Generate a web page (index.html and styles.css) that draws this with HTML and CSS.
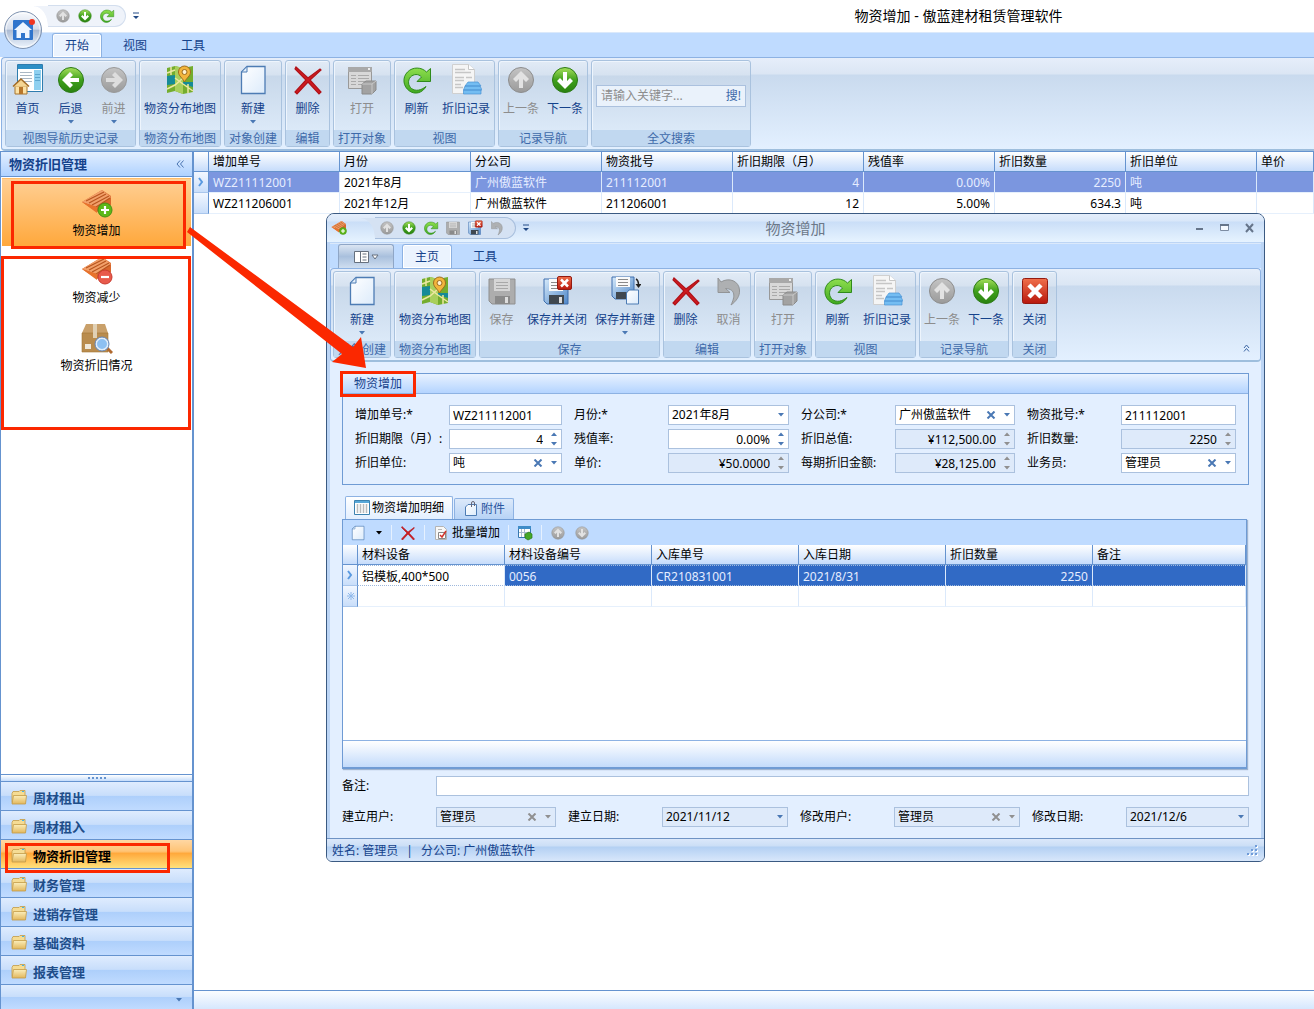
FILE: index.html
```html
<!DOCTYPE html>
<html lang="zh-CN">
<head>
<meta charset="utf-8">
<title>物资增加 - 傲蓝建材租赁管理软件</title>
<link rel="stylesheet" href="styles.css">
</head>
<body>
<svg class="sprite" width="0" height="0" aria-hidden="true">
  <defs>
    <linearGradient id="gGreen" x1="0" y1="0" x2="0" y2="1"><stop offset="0" stop-color="#a6e05c"/><stop offset=".5" stop-color="#3fa01c"/><stop offset="1" stop-color="#2a8210"/></linearGradient>
    <linearGradient id="gFresh" x1="0" y1="0" x2="0" y2="1"><stop offset="0" stop-color="#8ede4e"/><stop offset="1" stop-color="#3fa91f"/></linearGradient>
    <linearGradient id="gGray" x1="0" y1="0" x2="0" y2="1"><stop offset="0" stop-color="#c4c4c4"/><stop offset="1" stop-color="#9a9a9a"/></linearGradient>
    <linearGradient id="gPage" x1="0" y1="0" x2="1" y2="1"><stop offset="0" stop-color="#fff"/><stop offset="1" stop-color="#dcebfb"/></linearGradient>
    <linearGradient id="gRed" x1="0" y1="0" x2="0" y2="1"><stop offset="0" stop-color="#f0704c"/><stop offset="1" stop-color="#b8170c"/></linearGradient>
    <linearGradient id="gFolder" x1="0" y1="0" x2="0" y2="1"><stop offset="0" stop-color="#fbeebb"/><stop offset="1" stop-color="#e2b75c"/></linearGradient>
    <linearGradient id="gDisk" x1="0" y1="0" x2="1" y2="1"><stop offset="0" stop-color="#d8ebfb"/><stop offset="1" stop-color="#4d86c8"/></linearGradient>
    <linearGradient id="gOrb" x1="0" y1="0" x2="0" y2="1"><stop offset="0" stop-color="#f8fafd"/><stop offset=".48" stop-color="#d3dceb"/><stop offset=".5" stop-color="#a9b9d2"/><stop offset="1" stop-color="#f0f7ff"/></linearGradient>
  </defs>
  <symbol id="arrow-left" viewBox="0 0 32 32"><circle cx="16" cy="16" r="12.500" fill="url(#gGreen)" stroke="#2b7a15"/><path d="M7 16l8-8 3 3-3 3h9v4h-9l3 3-3 3z" fill="#fff"/></symbol>
  <symbol id="arrow-right-off" viewBox="0 0 32 32"><circle cx="16" cy="16" r="12.500" fill="url(#gGray)" stroke="#999"/><path d="M25 16l-8-8-3 3 3 3H8v4h9l-3 3 3 3z" fill="#ddd"/></symbol>
  <symbol id="arrow-up-off" viewBox="0 0 32 32"><circle cx="16" cy="16" r="12.500" fill="url(#gGray)" stroke="#8d8d8d"/><path d="M16 7l-8 8 3 3 3-3v9h4v-9l3 3 3-3z" fill="#e2e2e2"/></symbol>
  <symbol id="arrow-down-off" viewBox="0 0 32 32"><circle cx="16" cy="16" r="12.500" fill="url(#gGray)" stroke="#8d8d8d"/><path d="M16 25l-8-8 3-3 3 3V8h4v9l3-3 3 3z" fill="#e2e2e2"/></symbol>
  <symbol id="arrow-down" viewBox="0 0 32 32"><circle cx="16" cy="16" r="12.500" fill="url(#gGreen)" stroke="#2b7a15"/><path d="M16 25l-8-8 3-3 3 3V8h4v9l3-3 3 3z" fill="#fff"/></symbol>
  <symbol id="homepage" viewBox="0 0 32 32"><path d="M5.500.5h25v27h-25z" fill="#fff" stroke="#2e7cae"/><path d="M6 1h24v4H6z" fill="#2c8fc6"/><path d="M22 6h7v20h-7z" fill="#8fd0f0"/><path d="M8 8.500h12M8 11.500h12M8 14.500h12M8 17.500h12" stroke="#a9b7c4"/><path d="M23 10.500h5M23 13.500h5M23 16.500h5" stroke="#5ea7cf"/><path d="M3 22h12v8H3z" fill="#fbe2a6" stroke="#a8742c"/><path d="M1 22.500L9 15l8 7.500" fill="#f5d694" stroke="#a26a24" stroke-width="1.500"/><path d="M7 23h4v7H7z" fill="#b8762a"/></symbol>
  <symbol id="map" viewBox="0 0 32 32"><path d="M3 4l8-2 8 2 10-2v26l-10 2-8-3-8 2z" fill="#74ad2e"/><path d="M11 2l8 2v26l-8-3z" fill="#a9cf5c"/><path d="M3 12l8-1v9l-8 1zM19 18l10 0v5l-10-3z" fill="#168a98"/><path d="M3 9l8-3M11 14l8 6 10 7M3 25l8-4 8-7M24 20v9M7 3v8" stroke="#ece7a0" fill="none" stroke-width="1.500"/><path d="M20.500 18c-2-4-6-6-6-10a6 6 0 0112 0c0 4-4 6-6 10z" fill="#f2b53c" stroke="#9d6a1c"/><circle cx="20.500" cy="8" r="2.500" fill="#fff3d0" stroke="#9d6a1c"/></symbol>
  <symbol id="newdoc" viewBox="0 0 32 32"><path d="M10 2.500h18v27H4.500V8z" fill="url(#gPage)" stroke="#4d7cb4" stroke-width="1.300"/><path d="M4.500 8H10V2.500z" fill="#e4f0fc" stroke="#4d7cb4"/></symbol>
  <symbol id="redx" viewBox="0 0 32 32"><path d="M4 3l12 11L28 5l1 1-11 10 11 12-2 2-11-12L5 30l-2-2 11-12L3 5z" fill="#cf1a20" stroke="#b01218" stroke-width="1.200"/></symbol>
  <symbol id="open-off" viewBox="0 0 32 32"><path d="M2.500 3.500h23v21h-23z" fill="#d8d8d8" stroke="#999"/><path d="M2 3h24v5H2z" fill="#a9a9a9"/><path d="M22 5h2" stroke="#eee" stroke-width="2"/><path d="M5 11.500h5M12 11.500h11M5 14.500h5M12 14.500h11M5 17.500h5M12 17.500h11M5 20.500h5M12 20.500h6" stroke="#aaa"/><path d="M16 20l4-3h10v9l-4 4H16z" fill="#a2a2a2" stroke="#8a8a8a"/><path d="M16 20h10v10M26 20l4-3" fill="none" stroke="#c8c8c8"/></symbol>
  <symbol id="refresh" viewBox="0 0 32 32"><path d="M29.500 4.500v13H16l4.500-4.500C17.500 9.500 12.500 10 9.500 13c-3 3.500-2.500 8.500 1 11.500 4 3 9.500 2 14.500-2C21.500 29 14 31 8.500 27 2 22.500 1 13.500 6.500 8 12 2.500 20.500 3 25.500 8z" fill="url(#gFresh)" stroke="#2f8a1b"/></symbol>
  <symbol id="record" viewBox="0 0 32 32"><path d="M2.500.5h16l6 5v24h-22z" fill="#f5f5f5" stroke="#d0d0d0"/><path d="M18.500.5v5h6" fill="#fff" stroke="#c6c6c6"/><path d="M5 5.500h10M5 8.500h16M5 13.500h9M16 13.500h6M5 16.500h9M5 20.500h6M5 23.500h8" stroke="#c6c6c6" stroke-width="1.500"/><path d="M18 18h10l3 4H15zM15 22h15l2 4H13.500zM13.500 26H31v4H13.500z" fill="#74bdf2" stroke="#4a94d4" stroke-width=".7"/></symbol>
  <symbol id="save-off" viewBox="0 0 32 32"><path d="M3 4h26v25H6l-3-3z" fill="#adadad" stroke="#8f8f8f"/><path d="M8 4h16v12H8z" fill="#d6d6d6"/><path d="M10 7.500h12M10 10.500h12M10 13.500h12" stroke="#a8a8a8"/><path d="M9 21h15v8H9z" fill="#8a8a8a"/><path d="M19 22h3v6h-3z" fill="#ddd"/></symbol>
  <symbol id="save-close" viewBox="0 0 32 32"><path d="M3 4h24v25H6l-3-3z" fill="url(#gDisk)" stroke="#3f6fae"/><path d="M8 4h14v12H8z" fill="#fafafa"/><path d="M10 7.500h9M10 10.500h9M10 13.500h9" stroke="#8a8a8a"/><path d="M8 20h15v9H8z" fill="#404850"/><path d="M18 22h3v6h-3z" fill="#ddd"/><rect x="16.500" y="1.500" width="14" height="13" rx="1.500" fill="url(#gRed)" stroke="#941a10"/><path d="M20 4.500l7 7m0-7l-7 7" stroke="#fff" stroke-width="2.500"/></symbol>
  <symbol id="save-new" viewBox="0 0 32 32"><path d="M3 2h22v22H6l-3-3z" fill="url(#gDisk)" stroke="#3f6fae"/><path d="M7 2h14v10H7z" fill="#fafafa"/><path d="M9 4.500h10M9 7.500h10M9 10.500h10" stroke="#8a8a8a"/><path d="M7 17h12v7H7z" fill="#404850"/><path d="M27 4c2 1 2.500 3 2.500 6" stroke="#222" fill="none" stroke-width="1.500"/><path d="M26.500 9h6l-3 4z" fill="#222"/><path d="M20 15h9.500v14h-12V18z" fill="url(#gPage)" stroke="#4d7cb4"/></symbol>
  <symbol id="undo-off" viewBox="0 0 32 32"><path d="M5 3l3 4c8-5 18-1 18.500 8 .5 6-3 11-8.500 15 4-8 5-16-5.500-16.500l4.500 4L5 17.500z" fill="#aeb0b2" stroke="#929496"/></symbol>
  <symbol id="close-red" viewBox="0 0 32 32"><rect x="3.500" y="3.500" width="25" height="25" rx="2" fill="url(#gRed)" stroke="#941a10"/><path d="M10 10l12 12m0-12L10 22" stroke="#fff" stroke-width="4.500"/></symbol>
  <symbol id="boards" viewBox="0 0 32 32"><path d="M1 14L21 2l9 6v9L16 24z" fill="#d9672c"/><path d="M1 14L21 2l9 7-14 10z" fill="#f2a06a"/><path d="M5 13L23 4M8 15L25 6M11 17L28 8M15 19l14-9" stroke="#b8561f" stroke-width="1.200"/><path d="M1 14l15 5v6z" fill="#e8732c"/></symbol>
  <symbol id="boards-add" viewBox="0 0 32 32"><use href="#boards"/><circle cx="24" cy="22" r="7" fill="#5cb818" stroke="#478f14"/><path d="M24 18v8M20 22h8" stroke="#fff" stroke-width="2.200"/></symbol>
  <symbol id="boards-sub" viewBox="0 0 32 32"><use href="#boards"/><circle cx="24" cy="22" r="7" fill="#e85a4c" stroke="#c93a2e"/><path d="M20 22h8" stroke="#fff" stroke-width="2.200"/></symbol>
  <symbol id="box-find" viewBox="0 0 32 32"><path d="M5 1h19l3 9H1z" fill="#c9a06a"/><path d="M1 10h26v19H1z" fill="#b98c4e" stroke="#a27638" stroke-width=".6"/><path d="M12 1h4v14h-4z" fill="#e0d0b4"/><path d="M4 21h6v5H4z" fill="#efe8da"/><path d="M26 25l5 5" stroke="#b06a30" stroke-width="3"/><circle cx="21" cy="21" r="6" fill="#8dc0f2" stroke="#e2edf8" stroke-width="2"/><circle cx="21" cy="21" r="7" fill="none" stroke="#5f84b8"/></symbol>
  <symbol id="folder" viewBox="0 0 16 16"><path d="M1 3.500L2 1.500h6L9 .5h5v12H1z" fill="#f5dc94" stroke="#c39a46" stroke-width=".8"/><path d="M2.500 5.500h13l-1 8.500H1z" fill="url(#gFolder)" stroke="#c39a46" stroke-width=".8"/><path d="M11 1.500h2" stroke="#3db4ec"/></symbol>
  <symbol id="table" viewBox="0 0 16 16"><path d="M.5.500h15v14H.5z" fill="#fff" stroke="#3c82b0"/><path d="M1 1h14v2H1z" fill="#59a8d8"/><path d="M3.500 4v9M6.500 4v9M9.500 4v9M12.500 4v9" stroke="#bbb" stroke-width="1.500"/></symbol>
  <symbol id="attach" viewBox="0 0 16 16"><path d="M5 3.500h8.500v11h-11V6z" fill="url(#gPage)" stroke="#4d7cb4"/><path d="M8.500 6V2a1.500 1.500 0 013 0v3" fill="none" stroke="#667"/></symbol>
  <symbol id="batch" viewBox="0 0 16 16"><path d="M2.500 1.500h8l3 3v10h-11z" fill="#f8f8f8" stroke="#b4b4b4"/><path d="M5 4.500h4" stroke="#b8b8b8"/><path d="M5.500 7.500h7v6h-7z" fill="#fff" stroke="#888"/><path d="M7 10l2 2 4-6" fill="none" stroke="#d2342a" stroke-width="1.500"/></symbol>
  <symbol id="table-ok" viewBox="0 0 16 16"><path d="M1.500 1.500h12v11h-12z" fill="#fff" stroke="#3778b0"/><path d="M1 1h13v3H1z" fill="#3f8cc8"/><path d="M4.500 4v8M7.500 4v8M2 7.500h11" stroke="#a8bcd0"/><path d="M8 9l4-2 3 2v4l-4 2-3-2z" fill="#46a828" stroke="#287a14" stroke-width=".7"/></symbol>
  <symbol id="down" viewBox="0 0 6 4"><path d="M0 0h6L3 3.500z" fill="currentColor"/></symbol>
  <symbol id="overflow" viewBox="0 0 8 8"><path d="M1 1h6" stroke="#234a86"/><path d="M1 4h6L4 7z" fill="#234a86"/></symbol>
  <symbol id="spin" viewBox="0 0 6 14"><path d="M0 4h6L3 .5zM0 10h6l-3 3.500z" fill="currentColor"/></symbol>
  <symbol id="clear" viewBox="0 0 10 8"><path d="M1.500.5l7 7m0-7l-7 7" stroke="currentColor" stroke-width="2"/></symbol>
</svg>

<header class="app-head">
  <div class="app-title">
    <div class="quick">
      <button aria-label="上一条"><svg class="i16"><use href="#arrow-up-off"/></svg></button>
      <button aria-label="下一条"><svg class="i16"><use href="#arrow-down"/></svg></button>
      <button aria-label="刷新"><svg class="i16"><use href="#refresh"/></svg></button>
    </div>
    <button class="more" aria-label="自定义"><svg width="8" height="8"><use href="#overflow"/></svg></button>
    <h1>物资增加 - 傲蓝建材租赁管理软件</h1>
  </div>
  <button class="orb" aria-label="应用程序">
    <svg width="40" height="40" viewBox="0 0 40 40"><circle cx="20" cy="20" r="18.500" fill="url(#gOrb)" stroke="#7f93b0"/><circle cx="20" cy="20" r="17" fill="none" stroke="#fff" opacity=".7"/><rect x="10" y="10" width="20" height="20" rx="1" fill="#2f74cc"/><path d="M20 12l9 8h-2.500v8H22v-5h-4v5h-4.500v-8H11z" fill="#eef5ff"/><circle cx="29" cy="12" r="3" fill="#f03420"/></svg>
  </button>
  <nav class="tabs app-tabs">
    <button class="tab on">开始</button><button class="tab">视图</button><button class="tab">工具</button>
  </nav>
  <div class="ribbon app-ribbon">
    <section class="grp"><div class="cmds">
      <button class="cmd"><svg class="i32"><use href="#homepage"/></svg><span>首页</span></button>
      <button class="cmd"><svg class="i32"><use href="#arrow-left"/></svg><span>后退</span><svg class="caret"><use href="#down"/></svg></button>
      <button class="cmd off"><svg class="i32"><use href="#arrow-right-off"/></svg><span>前进</span><svg class="caret"><use href="#down"/></svg></button>
    </div><h2>视图导航历史记录</h2></section>
    <section class="grp"><div class="cmds"><button class="cmd"><svg class="i32"><use href="#map"/></svg><span>物资分布地图</span></button></div><h2>物资分布地图</h2></section>
    <section class="grp"><div class="cmds"><button class="cmd"><svg class="i32"><use href="#newdoc"/></svg><span>新建</span><svg class="caret"><use href="#down"/></svg></button></div><h2>对象创建</h2></section>
    <section class="grp"><div class="cmds"><button class="cmd"><svg class="i32"><use href="#redx"/></svg><span>删除</span></button></div><h2>编辑</h2></section>
    <section class="grp"><div class="cmds"><button class="cmd off"><svg class="i32"><use href="#open-off"/></svg><span>打开</span></button></div><h2>打开对象</h2></section>
    <section class="grp"><div class="cmds">
      <button class="cmd"><svg class="i32"><use href="#refresh"/></svg><span>刷新</span></button>
      <button class="cmd"><svg class="i32"><use href="#record"/></svg><span>折旧记录</span></button>
    </div><h2>视图</h2></section>
    <section class="grp"><div class="cmds">
      <button class="cmd off"><svg class="i32"><use href="#arrow-up-off"/></svg><span>上一条</span></button>
      <button class="cmd"><svg class="i32"><use href="#arrow-down"/></svg><span>下一条</span></button>
    </div><h2>记录导航</h2></section>
    <section class="grp search-grp"><div class="cmds"><div class="search"><input type="text" aria-label="全文搜索" placeholder="请输入关键字..."><button>搜!</button></div></div><h2>全文搜索</h2></section>
  </div>
</header>

<div class="work">
  <aside class="side">
    <div class="side-head"><h2>物资折旧管理</h2><button aria-label="折叠"><svg width="8" height="8" viewBox="0 0 8 8"><path d="M4 .5L1 4l3 3.500M7.500.5l-3 3.500 3 3.500" fill="none" stroke="#4a74b0"/></svg></button></div>
    <ul class="side-items">
      <li><a href="#" class="on"><svg class="i32"><use href="#boards-add"/></svg>物资增加</a></li>
      <li><a href="#"><svg class="i32"><use href="#boards-sub"/></svg>物资减少</a></li>
      <li><a href="#"><svg class="i32"><use href="#box-find"/></svg>物资折旧情况</a></li>
    </ul>
    <div class="splitter"><i></i></div>
    <nav class="side-nav">
      <a href="#"><svg class="i16"><use href="#folder"/></svg>周材租出</a>
      <a href="#"><svg class="i16"><use href="#folder"/></svg>周材租入</a>
      <a href="#" class="on"><svg class="i16"><use href="#folder"/></svg>物资折旧管理</a>
      <a href="#"><svg class="i16"><use href="#folder"/></svg>财务管理</a>
      <a href="#"><svg class="i16"><use href="#folder"/></svg>进销存管理</a>
      <a href="#"><svg class="i16"><use href="#folder"/></svg>基础资料</a>
      <a href="#"><svg class="i16"><use href="#folder"/></svg>报表管理</a>
      <div class="side-more"><button aria-label="更多"><svg class="caret"><use href="#down"/></svg></button></div>
    </nav>
  </aside>
  <main class="list">
    <table class="grid main-grid">
      <colgroup><col class="c-mark"><col><col><col><col><col><col><col><col><col class="c-rest"></colgroup>
      <thead><tr><th></th><th>增加单号</th><th>月份</th><th>分公司</th><th>物资批号</th><th>折旧期限（月）</th><th>残值率</th><th>折旧数量</th><th>折旧单位</th><th>单价</th></tr></thead>
      <tbody>
        <tr class="sel"><th class="mark"><svg width="6" height="10" viewBox="0 0 6 10"><path d="M1 1l3 4-3 4" fill="none" stroke="#5a9ae0" stroke-width="2"/></svg></th><td>WZ211112001</td><td class="focus">2021年8月</td><td>广州傲蓝软件</td><td>211112001</td><td class="r">4</td><td class="r">0.00%</td><td class="r">2250</td><td>吨</td><td></td></tr>
        <tr><th class="mark"></th><td>WZ211206001</td><td>2021年12月</td><td>广州傲蓝软件</td><td>211206001</td><td class="r">12</td><td class="r">5.00%</td><td class="r">634.3</td><td>吨</td><td></td></tr>
      </tbody>
    </table>
    <div class="list-foot"></div>
  </main>
</div>

<div class="win" role="dialog" aria-label="物资增加">
  <div class="win-title">
    <div class="win-left">
      <svg class="i16"><use href="#boards-add"/></svg>
      <div class="quick">
        <button aria-label="上一条"><svg class="i16"><use href="#arrow-up-off"/></svg></button>
        <button aria-label="下一条"><svg class="i16"><use href="#arrow-down"/></svg></button>
        <button aria-label="刷新"><svg class="i16"><use href="#refresh"/></svg></button>
        <button aria-label="保存"><svg class="i16"><use href="#save-off"/></svg></button>
        <button aria-label="保存并关闭"><svg class="i16"><use href="#save-close"/></svg></button>
        <button aria-label="撤销"><svg class="i16"><use href="#undo-off"/></svg></button>
      </div>
      <button class="more" aria-label="自定义"><svg width="8" height="8"><use href="#overflow"/></svg></button>
    </div>
    <h2>物资增加</h2>
    <div class="win-ctl">
      <button aria-label="最小化"><svg width="11" height="10" viewBox="0 0 11 10"><path d="M2 6h7" stroke="#66758a" stroke-width="2"/></svg></button>
      <button aria-label="最大化"><svg width="11" height="10" viewBox="0 0 11 10"><path d="M1.500 1.500h8v6h-8z" fill="#f6faff" stroke="#7d8ca2"/><path d="M1 2h9" stroke="#66758a" stroke-width="2"/></svg></button>
      <button aria-label="关闭"><svg width="11" height="10" viewBox="0 0 11 10"><path d="M2 1l7 8m0-8L2 9" stroke="#66758a" stroke-width="2"/></svg></button>
    </div>
  </div>
  <div class="win-frame">
    <nav class="tabs win-tabs">
      <button class="menu-btn" aria-label="菜单"><svg width="26" height="14" viewBox="0 0 26 14"><path d="M1.500 1.500h14v11h-14zM7.500 1.500v11" fill="#fff" stroke="#66707e"/><path d="M9.500 4h4M9.500 7h4M9.500 10h4" stroke="#66707e"/><path d="M19 5h6l-3 4z" fill="#fff" stroke="#66707e"/></svg></button>
      <button class="tab on">主页</button><button class="tab">工具</button>
    </nav>
    <div class="ribbon win-ribbon">
      <section class="grp"><div class="cmds"><button class="cmd"><svg class="i32"><use href="#newdoc"/></svg><span>新建</span><svg class="caret"><use href="#down"/></svg></button></div><h2>对象创建</h2></section>
      <section class="grp"><div class="cmds"><button class="cmd"><svg class="i32"><use href="#map"/></svg><span>物资分布地图</span></button></div><h2>物资分布地图</h2></section>
      <section class="grp"><div class="cmds">
        <button class="cmd off"><svg class="i32"><use href="#save-off"/></svg><span>保存</span></button>
        <button class="cmd"><svg class="i32"><use href="#save-close"/></svg><span>保存并关闭</span></button>
        <button class="cmd"><svg class="i32"><use href="#save-new"/></svg><span>保存并新建</span><svg class="caret"><use href="#down"/></svg></button>
      </div><h2>保存</h2></section>
      <section class="grp"><div class="cmds">
        <button class="cmd"><svg class="i32"><use href="#redx"/></svg><span>删除</span></button>
        <button class="cmd off"><svg class="i32"><use href="#undo-off"/></svg><span>取消</span></button>
      </div><h2>编辑</h2></section>
      <section class="grp"><div class="cmds"><button class="cmd off"><svg class="i32"><use href="#open-off"/></svg><span>打开</span></button></div><h2>打开对象</h2></section>
      <section class="grp"><div class="cmds">
        <button class="cmd"><svg class="i32"><use href="#refresh"/></svg><span>刷新</span></button>
        <button class="cmd"><svg class="i32"><use href="#record"/></svg><span>折旧记录</span></button>
      </div><h2>视图</h2></section>
      <section class="grp"><div class="cmds">
        <button class="cmd off"><svg class="i32"><use href="#arrow-up-off"/></svg><span>上一条</span></button>
        <button class="cmd"><svg class="i32"><use href="#arrow-down"/></svg><span>下一条</span></button>
      </div><h2>记录导航</h2></section>
      <section class="grp"><div class="cmds"><button class="cmd"><svg class="i32"><use href="#close-red"/></svg><span>关闭</span></button></div><h2>关闭</h2></section>
      <button class="fold" aria-label="折叠功能区"><svg width="7" height="8" viewBox="0 0 7 8"><path d="M1 4l2.500-3L6 4M1 7.500l2.500-3 2.500 3" fill="none" stroke="#3c66a4"/></svg></button>
    </div>
    <form class="win-body">
      <fieldset class="box">
        <legend>物资增加</legend>
        <div class="fields">
          <div class="field"><label for="f1">增加单号:*</label><div class="ed"><input id="f1" value="WZ211112001"></div></div>
          <div class="field"><label for="f2">月份:*</label><div class="ed"><select id="f2"><option>2021年8月</option></select><svg class="caret"><use href="#down"/></svg></div></div>
          <div class="field"><label for="f3">分公司:*</label><div class="ed"><select id="f3"><option>广州傲蓝软件</option></select><button type="button" aria-label="清除"><svg class="clear"><use href="#clear"/></svg></button><svg class="caret"><use href="#down"/></svg></div></div>
          <div class="field"><label for="f4">物资批号:*</label><div class="ed"><input id="f4" value="211112001"></div></div>
          <div class="field"><label for="f5">折旧期限（月）:</label><div class="ed"><input id="f5" class="r" value="4"><svg class="spin"><use href="#spin"/></svg></div></div>
          <div class="field"><label for="f6">残值率:</label><div class="ed"><input id="f6" class="r" value="0.00%"><svg class="spin"><use href="#spin"/></svg></div></div>
          <div class="field"><label for="f7">折旧总值:</label><div class="ed ro"><input id="f7" class="r" value="¥112,500.00" readonly><svg class="spin"><use href="#spin"/></svg></div></div>
          <div class="field"><label for="f8">折旧数量:</label><div class="ed ro"><input id="f8" class="r" value="2250" readonly><svg class="spin"><use href="#spin"/></svg></div></div>
          <div class="field"><label for="f9">折旧单位:</label><div class="ed"><select id="f9"><option>吨</option></select><button type="button" aria-label="清除"><svg class="clear"><use href="#clear"/></svg></button><svg class="caret"><use href="#down"/></svg></div></div>
          <div class="field"><label for="f10">单价:</label><div class="ed ro"><input id="f10" class="r" value="¥50.0000" readonly><svg class="spin"><use href="#spin"/></svg></div></div>
          <div class="field"><label for="f11">每期折旧金额:</label><div class="ed ro"><input id="f11" class="r" value="¥28,125.00" readonly><svg class="spin"><use href="#spin"/></svg></div></div>
          <div class="field"><label for="f12">业务员:</label><div class="ed"><select id="f12"><option>管理员</option></select><button type="button" aria-label="清除"><svg class="clear"><use href="#clear"/></svg></button><svg class="caret"><use href="#down"/></svg></div></div>
        </div>
      </fieldset>
      <div class="dtabs">
        <button type="button" class="on"><svg class="i16"><use href="#table"/></svg>物资增加明细</button>
        <button type="button"><svg class="i16"><use href="#attach"/></svg>附件</button>
      </div>
      <div class="detail">
        <div class="bar">
          <button type="button" class="new" aria-label="新建"><svg class="i16"><use href="#newdoc"/></svg><svg class="caret"><use href="#down"/></svg></button><i></i>
          <button type="button" aria-label="删除"><svg class="i16"><use href="#redx"/></svg></button><i></i>
          <button type="button"><svg class="i16"><use href="#batch"/></svg>批量增加</button><i></i>
          <button type="button" aria-label="导出"><svg class="i16"><use href="#table-ok"/></svg></button><i></i>
          <button type="button" aria-label="上移"><svg class="i16"><use href="#arrow-up-off"/></svg></button>
          <button type="button" aria-label="下移"><svg class="i16"><use href="#arrow-down-off"/></svg></button>
        </div>
        <table class="grid sub-grid">
          <colgroup><col class="c-mark"><col><col><col><col><col><col class="c-rest"></colgroup>
          <thead><tr><th></th><th>材料设备</th><th>材料设备编号</th><th>入库单号</th><th>入库日期</th><th>折旧数量</th><th>备注</th></tr></thead>
          <tbody>
            <tr class="sel"><th class="mark"><svg width="6" height="10" viewBox="0 0 6 10"><path d="M1 1l3 4-3 4" fill="none" stroke="#5a9ae0" stroke-width="2"/></svg></th><td class="focus">铝模板,400*500</td><td>0056</td><td>CR210831001</td><td>2021/8/31</td><td class="r">2250</td><td></td></tr>
            <tr><th class="mark"><svg width="8" height="8" viewBox="0 0 8 8"><path d="M4 0v8M0 4h8M1 1l6 6M7 1L1 7" stroke="#8fb8ea"/></svg></th><td></td><td></td><td></td><td></td><td></td><td></td></tr>
          </tbody>
        </table>
        <div class="detail-foot"></div>
      </div>
      <div class="field memo"><label for="m1">备注:</label><div class="ed"><input id="m1"></div></div>
      <div class="audit">
        <div class="field"><label for="a1">建立用户:</label><div class="ed ro"><select id="a1"><option>管理员</option></select><button type="button" aria-label="清除"><svg class="clear"><use href="#clear"/></svg></button><svg class="caret"><use href="#down"/></svg></div></div>
        <div class="field"><label for="a2">建立日期:</label><div class="ed ro date"><select id="a2"><option>2021/11/12</option></select><svg class="caret"><use href="#down"/></svg></div></div>
        <div class="field"><label for="a3">修改用户:</label><div class="ed ro"><select id="a3"><option>管理员</option></select><button type="button" aria-label="清除"><svg class="clear"><use href="#clear"/></svg></button><svg class="caret"><use href="#down"/></svg></div></div>
        <div class="field"><label for="a4">修改日期:</label><div class="ed ro date"><select id="a4"><option>2021/12/6</option></select><svg class="caret"><use href="#down"/></svg></div></div>
      </div>
    </form>
  </div>
  <footer class="status"><span>姓名: 管理员</span><b>|</b><span>分公司: 广州傲蓝软件</span>
    <svg width="12" height="12" viewBox="0 0 12 12"><path d="M9 1h2v2H9zM9 5h2v2H9zM5 5h2v2H5zM9 9h2v2H9zM5 9h2v2H5zM1 9h2v2H1z" fill="#fff"/><path d="M8 0h2v2H8zM8 4h2v2H8zM4 4h2v2H4zM8 8h2v2H8zM4 8h2v2H4zM0 8h2v2H0z" fill="#6f9bd8"/></svg>
  </footer>
</div>

<svg class="marks" width="420" height="880" aria-hidden="true">
  <g fill="none" stroke="#fb2800" stroke-width="3"><path d="M12.500 182.500h172v65h-172zM2.500 257.500h187v171H2.500zM6.500 844.500h162v27H6.500zM341.500 372.500h73v23h-73z"/></g>
  <path d="M190 227l163 120 8-10 5 31-34-6 10-8L187 232z" fill="#fb2800"/>
</svg>
</body>
</html>
```
FILE: styles.css
```css
* { box-sizing: border-box; }
body {
  margin: 0;
  min-height: 100vh;
  display: flex;
  flex-direction: column;
  position: relative;
  overflow-x: hidden;
  background: #fff;
  color: #000;
  font: 12px/16px "Noto Sans", "Noto Sans CJK SC", sans-serif;
}
h1, h2, ul, fieldset { margin: 0; padding: 0; border: 0; font-weight: normal; font-size: 12px; }
ul { list-style: none; }
a { color: inherit; text-decoration: none; }
button, input, select { font: inherit; color: inherit; border: 0; background: none; padding: 0; margin: 0; outline: 0; border-radius: 0; }
svg { display: block; flex: none; }
.sprite, .marks { position: absolute; left: 0; top: 0; pointer-events: none; }
.marks { z-index: 5; }
.i32 { width: 32px; height: 32px; }
.i16 { width: 16px; height: 16px; }
.caret { width: 6px; height: 4px; color: #4a78b4; }
.r { text-align: right; }

/* application header */
.app-head { position: relative; }
.app-title { display: flex; align-items: center; height: 32px; }
.quick { display: flex; align-items: center; gap: 6px; height: 22px; border: 1px solid #d3deee; border-left: 0; background: #eff3fa; border-radius: 0 11px 11px 0; }
.quick::before { content: ""; width: 14px; height: 20px; background: radial-gradient(ellipse 14px 20px at 0 100%, transparent 96%, #eff3fa 100%); }
.app-title .quick { margin-left: 48px; padding: 0 10px 0 7px; }
.app-title .quick::before { margin: 0 1px 0 -21px; }
.more { margin-left: 6px; }
.app-title h1 { flex: 1; padding-left: 463px; text-align: center; font-size: 14px; line-height: 20px; }
.orb { position: absolute; left: 3px; top: 10px; }
.tabs { display: flex; gap: 8px; background: #bfdbff; color: #15428b; border-top: 1px solid #dbe9fb; }
.app-tabs { height: 25px; padding-left: 52px; }
.tab { width: 50px; height: 24px; border: 1px solid transparent; border-bottom: 0; border-radius: 3px 3px 0 0; }
.tab.on { background: #ebf3fe; border-color: #8db2e3; box-shadow: inset 0 0 0 1px #fff; }
.ribbon {
  display: flex;
  gap: 3px;
  border: 1px solid #8db2e3;
  border-radius: 4px 0 0 4px;
  background: linear-gradient(#e6eefa 0, #dbe6f4 16px, #c9daee 17px, #e3f0ff 100%);
}
.app-ribbon { margin-left: 1px; padding: 2px 3px; border-right: 0; border-bottom: 2px solid #9ebedd; }
.grp { display: flex; flex-direction: column; border: 1px solid #a9c2de; border-radius: 3px; background: linear-gradient(#e2ebf6 0, #d6e2f0 14px, #c8d8ea 15px, #e1eefc 100%); box-shadow: inset 1px 1px 0 #eef5fd; }
.cmds { display: flex; height: 69px; justify-content: center; }
.cmd { min-width: 43px; padding: 3px 4px 0; display: flex; flex-direction: column; align-items: center; color: #15428b; white-space: nowrap; }
.cmd span { margin-top: 5px; }
.cmd .caret { margin-top: 3px; }
.cmd.off { color: #8d8d8d; }
.grp h2 { height: 16px; padding: 0 4px; line-height: 18px; text-align: center; color: #3e6aaa; background: #c1d8f0; white-space: nowrap; }
.search-grp { width: 160px; }
.search-grp .cmds { padding: 0 4px; align-items: center; }
.search { display: flex; width: 100%; height: 22px; border: 1px solid #abc1de; background: #eaf2fb; padding: 0 4px; }
.search input { flex: 1; min-width: 0; }
.search input::placeholder { color: #8d8d8d; opacity: 1; }
.search button { color: #3e6aaa; }

/* side panel */
.work { flex: 1; display: flex; border-top: 1px solid #6593cf; }
.side { flex: none; width: 194px; display: flex; flex-direction: column; border: 1px solid #6593cf; border-width: 0 2px 0 1px; }
.side-head { display: flex; align-items: center; justify-content: space-between; height: 25px; padding: 0 8px; border-bottom: 1px solid #6593cf; background: linear-gradient(#e3efff, #afd2ff); color: #15428b; }
.side-head h2 { font-size: 13px; font-weight: bold; }
.side-items { flex: 1; padding-top: 1px; }
.side-items a { display: flex; flex-direction: column; align-items: center; gap: 3px; height: 68px; padding-top: 9px; }
.side-items a.on { margin: 0 1px; background: linear-gradient(#ffcf94, #ffa83c); border-top: 1px solid #ffbd69; }
.splitter { display: flex; align-items: center; justify-content: center; height: 8px; border: 1px solid #6593cf; border-width: 1px 0; background: linear-gradient(#fff, #c4dcfb); }
.splitter i { width: 18px; height: 2px; background: repeating-linear-gradient(90deg, #6593cf 0 2px, transparent 2px 4px); }
.side-nav a, .side-more { display: flex; align-items: center; height: 29px; border-bottom: 1px solid #6593cf; background: linear-gradient(#dfecfe 0, #c8defb 48%, #adcffb 50%, #c0dbff 100%); }
.side-nav a { gap: 6px; padding-left: 10px; padding-top: 3px; color: #204d89; font-size: 13px; font-weight: bold; }
.side-nav a.on { color: #000; background: linear-gradient(#ffd7a3 0, #ffc476 40%, #ffa93c 48%, #ffe17b 100%); }
.side-more { justify-content: flex-end; height: 24px; padding: 6px 10px 0; border: 0; }

/* tables */
.list { flex: 1; min-width: 0; display: flex; flex-direction: column; overflow: hidden; }
.list-foot { margin-top: auto; height: 19px; border-top: 1px solid #6593cf; background: linear-gradient(#fbfdff, #d6e7fd); }
.grid { width: 100%; table-layout: fixed; border-collapse: separate; border-spacing: 0; }
.grid col { width: 131px; }
.grid .c-mark { width: 15px; }
.grid .c-rest { width: auto; }
.grid th, .grid td { height: 21px; padding: 2px 4px 0; line-height: 16px; border-right: 1px solid #dbe9fb; border-bottom: 1px solid #e6f0fc; white-space: nowrap; overflow: hidden; }
.grid thead th { height: 20px; padding: 0 4px; text-align: left; font-weight: normal; background: linear-gradient(#fff, #c6dcfb); border-right-color: #6593cf; border-bottom-color: #6593cf; }
.grid .mark { padding: 0 2px 0 4px; background: linear-gradient(#f2f7ff, #c9defa); border-right-color: #6593cf; border-bottom-color: #a9c6ec; }
.grid .sel td { color: #e6edff; background: #7b96df; }
.grid .sel td.focus { color: #000; background: #fff; }
.sub-grid col { width: 147px; }
.sub-grid .sel td { background: #316ac5; border-top: 1px dotted #9fb8dc; border-bottom: 1px dotted #9fb8dc; }

/* document window */
.win { position: absolute; left: 326px; right: 49px; top: 213px; border: 1px solid #3b5a82; border-radius: 8px 8px 6px 6px; overflow: hidden; background: #e3efff; z-index: 2; }
.win-title { display: grid; grid-template-columns: 1fr auto 1fr; align-items: center; height: 28px; background: linear-gradient(#e4eefb 0, #d9e7f9 7px, #cadef7 8px, #e6f3ff 100%); }
.win-title h2 { font-size: 15px; line-height: 20px; color: #6c7888; }
.win-left { display: flex; align-items: center; padding-left: 4px; }
.win-left .quick { margin-left: 28px; padding: 0 10px 0 4px; background: #d5e2f3; border-color: #a8bfdd; }
.win-left .quick::before { margin: 0 -2px 0 -18px; background: radial-gradient(ellipse 14px 20px at 0 100%, transparent 96%, #d5e2f3 100%); }
.win-ctl { display: flex; justify-content: flex-end; gap: 14px; padding-right: 9px; }
.win-frame { border: 1px solid #a8c4ea; border-width: 1px 3px 0; border-color: #bcd5f5; }
.win-tabs { height: 25px; padding-left: 8px; }
.menu-btn { width: 56px; height: 24px; display: flex; align-items: center; justify-content: center; border: 1px solid #8fa6c6; border-bottom: 0; border-radius: 3px 3px 0 0; background: linear-gradient(#dbe5f2, #a9c0dd 50%, #cfdef0); }
.win-ribbon { padding: 2px; border-radius: 4px; border-bottom: 2px solid #9ebedd; }
.fold { margin: auto 8px 6px auto; }
.win-body { display: block; padding: 11px 12px; }
.box { border: 1px solid #6f9bd4; min-width: 0; }
.box legend { float: left; width: 100%; height: 20px; padding: 0 11px; line-height: 20px; color: #15428b; background: linear-gradient(#e8f2ff, #b4d4ff); border-bottom: 1px solid #8db2e3; }
.fields { clear: both; display: grid; grid-template-columns: 207fr 215fr 214fr 209fr; gap: 4px 12px; padding: 11px 12px; }
.field { display: flex; align-items: center; min-width: 0; }
.field label { flex: none; width: 94px; white-space: nowrap; }
.ed { flex: 1; min-width: 0; display: flex; align-items: center; height: 20px; padding-right: 4px; gap: 8px; border: 1px solid #abc1de; background: #fff; }
.ed input, .ed select { flex: 1; min-width: 0; height: 18px; padding-left: 3px; appearance: none; }
.ed.ro { background: #deeafa; }
.ed.ro .caret, .ed.ro .clear, .ed.ro .spin { color: #909090; }
.ed.date .caret { color: #4a78b4; }
.spin { width: 6px; height: 14px; color: #4a78b4; }
.clear { width: 10px; height: 8px; color: #4a78b4; }
.dtabs { display: flex; align-items: flex-end; gap: 1px; margin: 11px 0 0 3px; }
.dtabs button { display: flex; align-items: center; gap: 2px; height: 21px; padding: 0 8px; color: #2a56a0; border: 1px solid #8db2e3; border-bottom: 0; border-radius: 2px 2px 0 0; background: linear-gradient(#dce9fa, #b7d3f6); }
.dtabs button.on { height: 23px; color: #000; background: linear-gradient(#fff, #e3efff); }
.detail { display: flex; flex-direction: column; height: 250px; margin-right: 2px; border: 1px solid #6f9bd4; background: #fff; box-shadow: 1px 1px 1px #9fb4d0; }
.bar { display: flex; align-items: center; gap: 8px; height: 25px; padding-left: 7px; background: #bfdbff; }
.bar button { display: flex; align-items: center; gap: 3px; }
.bar .new { gap: 10px; padding-right: 1px; }
.bar .new .caret { color: #000; }
.bar i { width: 1px; height: 15px; background: #e6f1ff; }
.detail-foot { margin-top: auto; height: 28px; border-top: 1px solid #8db2e3; border-bottom: 1px solid #6f9bd4; background: linear-gradient(#fff, #c3dbfb); }
.memo { margin-top: 7px; }
.audit { display: grid; grid-template-columns: 214fr 220fr 220fr 217fr; gap: 12px; margin-top: 11px; }
.status { display: flex; gap: 8px; align-items: center; height: 23px; padding: 2px 5px 0; border-top: 1px solid #6f93c4; color: #15428b; background: linear-gradient(#dbe8fa 0, #cbdef6 7px, #b3d0f3 8px, #d8e7fb 100%); }
.status b { font-weight: normal; }
.status svg { margin-left: auto; }
```
